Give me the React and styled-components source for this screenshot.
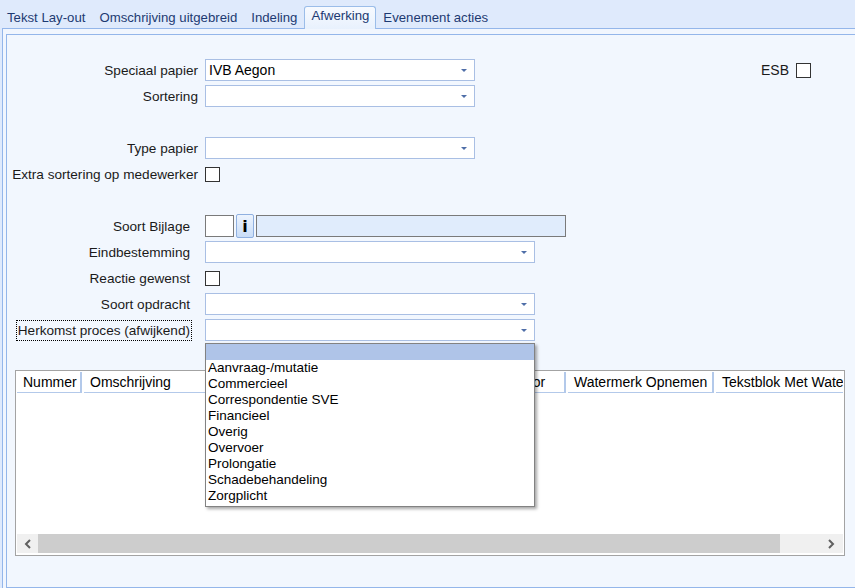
import React from "react";
import styled, { createGlobalStyle } from "styled-components";

const GlobalStyle = createGlobalStyle`
  body {
    margin: 0;
    background: #dfeafc;
    font-family: "Liberation Sans", Arial, sans-serif;
    font-size: 14px;
    overflow: hidden;
  }
`;

const Page = styled.div`
  width: 855px;
  height: 588px;
  display: flex;
  flex-direction: column;
  overflow: hidden;
`;

const TabStrip = styled.div`
  height: 28px;
  display: flex;
  align-items: flex-end;
  flex-shrink: 0;
`;

const Tab = styled.div`
  padding: 0 6px;
  font-size: 13.2px;
  color: #1d3a72;
  white-space: nowrap;
  height: ${(p) => (p.$active ? "22px" : "20px")};
  line-height: ${(p) => (p.$active ? "18px" : "20px")};
  margin-bottom: ${(p) => (p.$active ? "-1px" : "0")};
  border: 1px solid ${(p) => (p.$active ? "#9bbde9" : "transparent")};
  border-bottom: none;
  border-radius: 3px 3px 0 0;
  background: ${(p) => (p.$active ? "linear-gradient(#f7faff, #e8f1fd)" : "transparent")};
  position: relative;
  z-index: 1;
`;

const Outer = styled.div`
  flex: 1;
  display: flex;
  flex-direction: column;
  margin-left: 2px;
  border-left: 1px solid #94b6ea;
  border-top: 1px solid #94b6ea;
  padding: 5px 0 0 3px;
  background: #f1f6fe;
`;

const Panel = styled.div`
  flex: 1;
  border: 1px solid #94b6ea;
  border-right: none;
  background: #f2f7fe;
  padding-top: 22px;
  display: flex;
  flex-direction: column;
`;

const Form = styled.div`
  display: flex;
  flex-direction: column;
`;

const Row = styled.div`
  display: grid;
  grid-template-columns: 191px 1fr;
  column-gap: 7px;
  height: 26px;
  align-items: center;
`;

const Label = styled.div`
  text-align: right;
  font-size: 13.6px;
  color: #1a1a1a;
  white-space: nowrap;
  justify-self: end;
  padding: 2px 1px;
  border: 1px dotted ${(p) => (p.$focus ? "#000" : "transparent")};
  margin-right: ${(p) => (p.$inset ? "6px" : "-2px")};
`;

const Field = styled.div`
  display: flex;
  align-items: center;
  position: relative;
`;

const Combo = styled.div`
  width: ${(p) => p.$w}px;
  height: 22px;
  box-sizing: border-box;
  border: 1px solid #a9bfe4;
  background: #fff;
  display: flex;
  align-items: center;
  justify-content: space-between;
  padding: 0 7px 0 3px;
  color: #000;
`;

const Arrow = styled.span`
  width: 0;
  height: 0;
  border-left: 3px solid transparent;
  border-right: 3px solid transparent;
  border-top: 3px solid #4f6ea8;
`;

const Check = styled.div`
  width: 15px;
  height: 15px;
  box-sizing: border-box;
  border: 1px solid #333;
  background: #fff;
`;

const Spacer = styled.div`
  flex: 1;
`;

const Esb = styled.div`
  display: flex;
  align-items: center;
  gap: 7px;
  margin-right: 44px;
  color: #1a1a1a;
`;

const CodeBox = styled.div`
  width: ${(p) => p.$w}px;
  height: 22px;
  box-sizing: border-box;
  border: 1px solid #7a7a7a;
  background: ${(p) => p.$bg || "#fff"};
`;

const InfoButton = styled.div`
  width: 18px;
  height: 24px;
  box-sizing: border-box;
  margin: 0 2px;
  border: 1px solid #8fb0e0;
  border-radius: 2px;
  background: linear-gradient(#edf4fe, #c9ddf7);
  display: flex;
  align-items: center;
  justify-content: center;
  font-family: "DejaVu Sans", sans-serif;
  font-weight: bold;
  font-size: 16px;
  color: #000;
`;

const DropList = styled.div`
  position: absolute;
  top: 24px;
  left: 0;
  width: 330px;
  box-sizing: border-box;
  border: 1px solid #828282;
  background: #fff;
  box-shadow: 2px 2px 3px rgba(0, 0, 0, 0.35);
  z-index: 10;
  padding-bottom: 2px;
`;

const DropItem = styled.div`
  height: 16px;
  line-height: 16px;
  padding-left: 2px;
  font-size: 13.5px;
  color: #000;
  background: ${(p) => (p.$selected ? "#afc4e8" : "transparent")};
`;

const Table = styled.div`
  margin: 27px 0 0 8px;
  width: 830px;
  height: 186px;
  box-sizing: border-box;
  border: 1px solid #a3a3a3;
  background: #fff;
  padding: 1px;
  display: flex;
  flex-direction: column;
`;

const HeaderRow = styled.div`
  display: flex;
  height: 21px;
  overflow: hidden;
  flex-shrink: 0;
`;

const HeaderCell = styled.div`
  flex-shrink: 0;
  width: ${(p) => p.$w}px;
  box-sizing: border-box;
  height: 21px;
  line-height: 20px;
  padding-left: 6px;
  margin-right: 2px;
  border-right: 2px solid #b3c9ea;
  border-bottom: 1px solid #b3c9ea;
  white-space: nowrap;
  overflow: hidden;
  color: #000;
`;

const TableBody = styled.div`
  flex: 1;
`;

const ScrollBar = styled.div`
  height: 19px;
  margin-bottom: 1px;
  display: flex;
  background: #f0f0f0;
`;

const ScrollButton = styled.div`
  width: ${(p) => p.$w}px;
  display: flex;
  align-items: center;
  justify-content: center;
`;

const Thumb = styled.div`
  width: 742px;
  background: #cdcdcd;
`;

const Track = styled.div`
  flex: 1;
`;

const Chevron = ({ dir }) => (
  <svg width="8" height="10" viewBox="0 0 8 10">
    <polyline
      points={dir === "left" ? "6,1 2,5 6,9" : "2,1 6,5 2,9"}
      fill="none"
      stroke="#606060"
      strokeWidth="2"
    />
  </svg>
);

const items = [
  "Aanvraag-/mutatie",
  "Commercieel",
  "Correspondentie SVE",
  "Financieel",
  "Overig",
  "Overvoer",
  "Prolongatie",
  "Schadebehandeling",
  "Zorgplicht",
];

const tabs = ["Tekst Lay-out", "Omschrijving uitgebreid", "Indeling", "Afwerking", "Evenement acties"];

const columns = [
  { title: "Nummer", w: 65 },
  { title: "Omschrijving", w: 356 },
  { title: "Afdrukken Door", w: 124 },
  { title: "Watermerk Opnemen", w: 146 },
  { title: "Tekstblok Met Watermerk", w: 160 },
];

const App = () => {
  return (
    <Page>
      <GlobalStyle />
      <TabStrip>
        {tabs.map((t) => (
          <Tab key={t} $active={t === "Afwerking"}>
            {t}
          </Tab>
        ))}
      </TabStrip>
      <Outer>
        <Panel>
          <Form>
            <Row>
              <Label>Speciaal papier</Label>
              <Field>
                <Combo $w={270}>
                  IVB Aegon
                  <Arrow />
                </Combo>
                <Spacer />
                <Esb>
                  ESB
                  <Check />
                </Esb>
              </Field>
            </Row>
            <Row>
              <Label>Sortering</Label>
              <Field>
                <Combo $w={270}>
                  <span />
                  <Arrow />
                </Combo>
              </Field>
            </Row>
            <Row />
            <Row>
              <Label>Type papier</Label>
              <Field>
                <Combo $w={270}>
                  <span />
                  <Arrow />
                </Combo>
              </Field>
            </Row>
            <Row>
              <Label>Extra sortering op medewerker</Label>
              <Field>
                <Check />
              </Field>
            </Row>
            <Row />
            <Row>
              <Label $inset>Soort Bijlage</Label>
              <Field>
                <CodeBox $w={29} />
                <InfoButton>i</InfoButton>
                <CodeBox $w={310} $bg="#e0ecfc" />
              </Field>
            </Row>
            <Row>
              <Label $inset>Eindbestemming</Label>
              <Field>
                <Combo $w={330}>
                  <span />
                  <Arrow />
                </Combo>
              </Field>
            </Row>
            <Row>
              <Label $inset>Reactie gewenst</Label>
              <Field>
                <Check />
              </Field>
            </Row>
            <Row>
              <Label $inset>Soort opdracht</Label>
              <Field>
                <Combo $w={330}>
                  <span />
                  <Arrow />
                </Combo>
              </Field>
            </Row>
            <Row>
              <Label $inset $focus>Herkomst proces (afwijkend)</Label>
              <Field>
                <Combo $w={330}>
                  <span />
                  <Arrow />
                </Combo>
                <DropList>
                  <DropItem $selected>&nbsp;</DropItem>
                  {items.map((i) => (
                    <DropItem key={i}>{i}</DropItem>
                  ))}
                </DropList>
              </Field>
            </Row>
          </Form>
          <Table>
            <HeaderRow>
              {columns.map((c) => (
                <HeaderCell key={c.title} $w={c.w}>
                  {c.title}
                </HeaderCell>
              ))}
            </HeaderRow>
            <TableBody />
            <ScrollBar>
              <ScrollButton $w={21}>
                <Chevron dir="left" />
              </ScrollButton>
              <Thumb />
              <Track />
              <ScrollButton $w={24}>
                <Chevron dir="right" />
              </ScrollButton>
            </ScrollBar>
          </Table>
        </Panel>
      </Outer>
    </Page>
  );
};

export default App;
